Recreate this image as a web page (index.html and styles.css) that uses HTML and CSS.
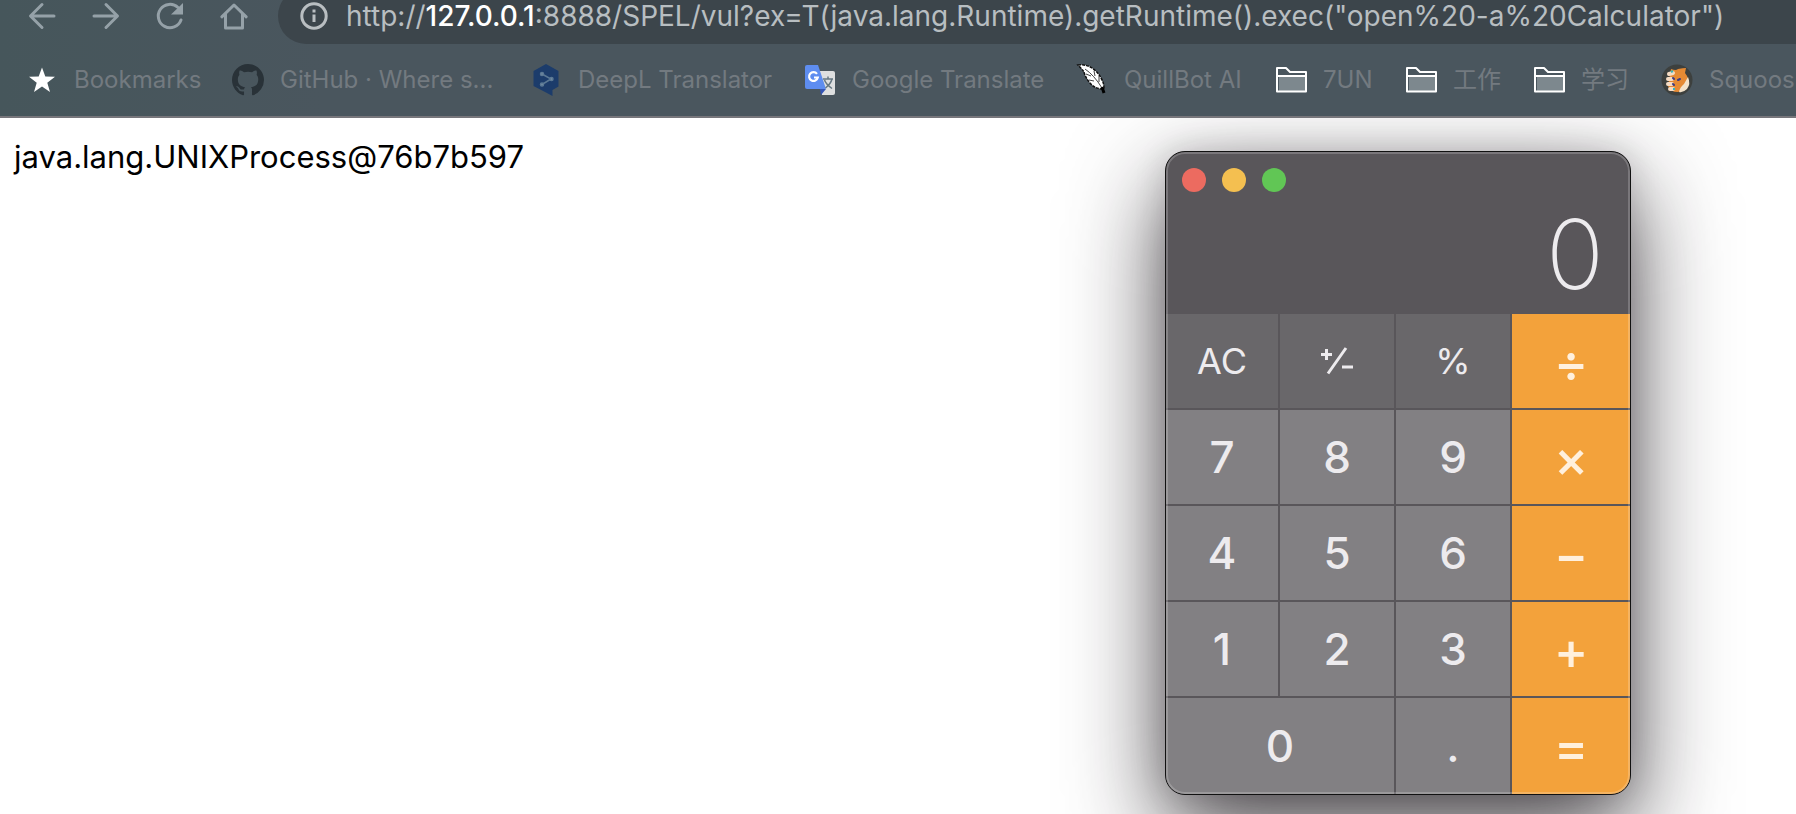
FILE: index.html
```html
<!DOCTYPE html>
<html lang="en">
<head>
<meta charset="utf-8">
<title>127.0.0.1:8888/SPEL/vul</title>
<link rel="stylesheet" href="styles.css">
</head>
<body>
<header class="chrome">
  <div class="toolbar">
    <nav class="nav" aria-label="Browser navigation">
      <button class="nav-btn" type="button" aria-label="Back"><svg viewBox="0 0 32 32"><path d="M28 16H5M16 4.500 4.500 16 16 27.500"/></svg></button>
      <button class="nav-btn" type="button" aria-label="Forward"><svg viewBox="0 0 32 32"><path d="M4 16h23M16 4.500 27.500 16 16 27.500"/></svg></button>
      <button class="nav-btn" type="button" aria-label="Reload"><svg viewBox="0 0 32 32"><path d="M27 20A11.700 11.700 0 1 1 24 7.500"/><path class="solid" d="M29 3v11.500H17z"/></svg></button>
      <button class="nav-btn" type="button" aria-label="Home"><svg viewBox="0 0 32 32"><path d="M3.800 16.800 16 5l12.200 11.800M7.500 14v14h17V14"/></svg></button>
    </nav>
    <div class="omnibox">
      <button class="info" type="button" aria-label="View site information"><svg viewBox="0 0 28 28"><circle cx="14" cy="14" r="12.200"/><path d="M14 12.500v7.500M14 7.500v3"/></svg></button>
      <div class="url" role="textbox" aria-label="Address" contenteditable="true" spellcheck="false">http://<span class="host">127.0.0.1</span>:8888/SPEL/vul?ex=T(java.lang.Runtime).getRuntime().exec("open%20-a%20Calculator")</div>
    </div>
  </div>
  <nav class="bookmarks" aria-label="Bookmarks">
    <a class="bookmark" href="#bookmarks"><svg viewBox="0 0 32 32"><path fill="#fff" d="M16 3.500l3.300 9.100 9.700.2-7.700 5.900 2.700 9.300-8-5.500-8 5.500 2.700-9.300L3 12.800l9.700-.2z"/></svg><span>Bookmarks</span></a>
    <a class="bookmark" href="#github"><svg viewBox="0 0 16 16"><path fill="#293238" d="M8 0C3.580 0 0 3.580 0 8c0 3.540 2.290 6.530 5.470 7.590.4.070.55-.17.550-.38 0-.19-.01-.82-.01-1.490-2.010.37-2.530-.49-2.690-.94-.09-.23-.48-.94-.82-1.130-.28-.15-.68-.52-.01-.53.630-.01 1.080.58 1.230.82.720 1.210 1.870.87 2.330.66.070-.52.280-.87.510-1.070-1.780-.2-3.640-.89-3.640-3.950 0-.87.310-1.590.82-2.150-.08-.2-.36-1.020.08-2.120 0 0 .67-.21 2.200.82.640-.18 1.320-.27 2-.27s1.360.09 2 .27c1.530-1.040 2.200-.82 2.200-.82.440 1.100.16 1.920.08 2.120.51.560.82 1.270.82 2.150 0 3.070-1.870 3.750-3.650 3.950.29.250.54.730.54 1.480 0 1.070-.01 1.930-.01 2.200 0 .21.150.46.550.38A8.010 8.010 0 0 0 16 8c0-4.420-3.580-8-8-8"/></svg><span>GitHub · Where s...</span></a>
    <a class="bookmark" href="#deepl"><svg viewBox="0 0 32 32"><path fill="#1c3c6b" d="M16 0 28.500 7v15.500L22.500 26v6L16 28.500 3.500 22V7z"/><g stroke="#5b7894" stroke-width="1.500" fill="#7890a4"><path fill="none" d="m12 10 9 5-9 5.500"/><circle cx="12" cy="10" r="1.500"/><circle cx="21.500" cy="15" r="1.500"/><circle cx="12" cy="20.500" r="1.500"/></g></svg><span>DeepL Translator</span></a>
    <a class="bookmark" href="#gtranslate"><svg viewBox="0 0 32 32"><path fill="#dedfe0" d="M13 7h16q2 0 2 2v20q0 2-2 2H18z"/><path fill="#3555b5" d="m16 25 6 0-5 6z"/><path fill="#5e8df0" d="M3 1h11l8 24H3q-2 0-2-2V3q0-2 2-2z"/><path fill="none" stroke="#fff" stroke-width="2.200" d="M13 9.800a4.400 4.400 0 1 0 .8 3.700H10"/><path fill="none" stroke="#667883" stroke-width="1.500" d="M19 15h10M24 12.500V15M28 15c-1 4-4 7-6.500 9M20.500 16c1 3 4 6 7.500 8.500"/></svg><span>Google Translate</span></a>
    <a class="bookmark" href="#quillbot"><svg viewBox="0 0 32 32"><path fill="#fff" stroke="#101010" stroke-width="1.500" stroke-dasharray="3 1" d="M2 1q8-1 14 3 6 4 9 10 3 5 3 10l-3 1q-7-1-11-6Q9 13 8 8 6 5 2 1z"/><path fill="none" stroke="#444" stroke-width="1" d="M9 5q9 6 17 19M10 10l5 2M13 16l5 1M18 7l1 5M23 12v6"/><path stroke="#000" stroke-width="3" d="m26 23 2 6"/></svg><span>QuillBot AI</span></a>
    <a class="bookmark" href="#7un"><svg viewBox="0 0 32 32"><use href="#folder"/></svg><span>7UN</span></a>
    <a class="bookmark" href="#work" lang="zh"><svg viewBox="0 0 32 32"><use href="#folder"/></svg><span>工作</span></a>
    <a class="bookmark" href="#study" lang="zh"><svg viewBox="0 0 32 32"><use href="#folder"/></svg><span>学习</span></a>
    <a class="bookmark" href="#squoosh"><svg viewBox="0 0 32 32"><circle cx="16" cy="16" r="15.500" fill="#3d403e"/><path fill="#e58a34" d="M10 5q5 2 7 0 5-1 8-1l-1 5q4 5 3 10-3 8-10 9-8 0-10-6z"/><path fill="#f3e2c9" d="M27 13q3 7-1 12-4 4-8 3 1-5 5-8z"/><path stroke="#f6dcc4" stroke-width="4" stroke-linecap="round" d="m8 10 4-1M7 15l4 0M7 20l4 0M9 25l3 0"/><path stroke="#3c3a82" stroke-width="2" stroke-linecap="round" d="m12 14 1 1M12 20l1 1M17 16l2-1"/><path stroke="#38b5bc" stroke-width="2" d="m10 8 2-1M12 25l2 0"/></svg><span>Squoos</span></a>
  </nav>
  <svg class="defs" aria-hidden="true"><defs><g id="folder"><path fill="#7d888e" d="M4 12h27v15H4z"/><path fill="none" stroke="#fff" stroke-width="2" stroke-linejoin="round" d="M2 4h9l4 4h16v19.500H2zM2 12h29"/></g></defs></svg>
</header>
<main class="page">
  <p class="output">java.lang.UNIXProcess@76b7b597</p>
  <section class="calculator" aria-label="Calculator">
    <div class="display">
      <div class="lights">
        <button class="light close" type="button" aria-label="Close"></button>
        <button class="light minimize" type="button" aria-label="Minimize"></button>
        <button class="light zoom" type="button" aria-label="Zoom"></button>
      </div>
      <output class="value">0</output>
    </div>
    <div class="keys">
      <button class="key fn" type="button">AC</button>
      <button class="key fn" type="button" aria-label="Plus minus"><svg class="sign" viewBox="0 0 34 28"><path d="M1 7.500h11M6.500 2v11M8 26.500 26 1M22 20h11"/></svg></button>
      <button class="key fn" type="button">%</button>
      <button class="key op" type="button">÷</button>
      <button class="key" type="button">7</button>
      <button class="key" type="button">8</button>
      <button class="key" type="button">9</button>
      <button class="key op" type="button">×</button>
      <button class="key" type="button">4</button>
      <button class="key" type="button">5</button>
      <button class="key" type="button">6</button>
      <button class="key op" type="button">−</button>
      <button class="key" type="button">1</button>
      <button class="key" type="button">2</button>
      <button class="key" type="button">3</button>
      <button class="key op" type="button">+</button>
      <button class="key wide" type="button">0</button>
      <button class="key" type="button">.</button>
      <button class="key op" type="button">=</button>
    </div>
  </section>
</main>
</body>
</html>
```
FILE: styles.css
```css
* { box-sizing: border-box; }

body {
  margin: 0;
  min-height: 100vh;
  display: flex;
  flex-direction: column;
  overflow: hidden;
  background: #fff;
  font-family: Inter, "Noto Sans CJK SC", sans-serif;
}

button {
  margin: 0;
  padding: 0;
  border: 0;
  background: none;
  font: inherit;
  color: inherit;
}

.chrome {
  overflow: hidden;
  background: linear-gradient(90deg, #46565b, #4a565e 18%, #4a565e);
  border-bottom: 2px solid #77767b;
}

.defs { display: none; }

.toolbar {
  display: flex;
  align-items: center;
  gap: 28px;
  height: 56px;
  margin-top: -12px;
  padding-left: 26px;
}

.nav { display: flex; gap: 32px; }

.nav-btn, .nav-btn svg { display: block; width: 32px; height: 32px; }

.nav-btn svg {
  fill: none;
  stroke: #95a1a8;
  stroke-width: 3;
  stroke-linecap: round;
  stroke-linejoin: round;
}

.nav-btn .solid { fill: #95a1a8; stroke: none; }

.omnibox {
  flex: 1;
  min-width: 0;
  align-self: stretch;
  display: flex;
  align-items: center;
  gap: 18px;
  padding-left: 22px;
  border-radius: 28px 0 0 28px;
  background: #3c454b;
}

.info, .info svg { display: block; width: 28px; height: 28px; }

.info svg { fill: none; stroke: #b9bec1; stroke-width: 3; }

.url {
  font-size: 28px;
  line-height: 32px;
  white-space: nowrap;
  color: #b8bec1;
  outline: none;
}

.host { color: #fff; font-weight: 500; }

.bookmarks {
  display: grid;
  grid-template-columns: 206px 298px 274px 272px 199px 130px 128px 128px 160px;
  align-items: center;
  height: 72px;
  padding-left: 26px;
}

.bookmark {
  display: flex;
  align-items: center;
  gap: 16px;
  font-size: 24px;
  line-height: 32px;
  white-space: nowrap;
  color: #737a80;
  text-decoration: none;
}

.bookmark svg { flex: none; width: 32px; height: 32px; }

.page {
  position: relative;
  flex: 1;
  overflow: hidden;
  padding: 19px 14px;
}

.output {
  margin: 0;
  font-size: 31px;
  line-height: 40px;
  color: #000;
}

.calculator {
  position: absolute;
  top: 33px;
  right: 165px;
  width: 466px;
  border: 1px solid #111;
  border-radius: 20px;
  overflow: hidden;
  background: #59565a;
  color: #edebee;
  box-shadow: 0 36px 96px rgba(20, 16, 20, 0.78), 0 0 32px rgba(20, 16, 20, 0.14);
}

.calculator::after {
  content: "";
  position: absolute;
  inset: 0;
  border: 2px solid rgba(255, 255, 255, 0.2);
  border-radius: 19px;
  pointer-events: none;
}

.display { padding: 16px; height: 162px; }

.lights { display: flex; gap: 16px; }

.light { width: 24px; height: 24px; border-radius: 50%; }
.close { background: #ec6b60; }
.minimize { background: #f4bf50; }
.zoom { background: #61c655; }

.value {
  display: block;
  padding: 0 10px;
  text-align: right;
  font-size: 96px;
  line-height: 124px;
  font-weight: 200;
}

.keys {
  display: grid;
  grid-template-columns: 112fr 114fr 114fr 118fr;
  grid-template-rows: repeat(4, 94px) 96px;
  gap: 2px;
}

.key {
  display: flex;
  align-items: center;
  justify-content: center;
  background: #828083;
  font-size: 44px;
  line-height: 48px;
  font-weight: 500;
}

.fn { background: #69676a; font-size: 36px; font-weight: 400; }
.op { background: #f3a23b; color: #fff0dd; padding-top: 4px; font-size: 52px; }
.wide { grid-column: span 2; }

.sign { width: 34px; height: 28px; fill: none; stroke: #edebee; stroke-width: 3; }
```
